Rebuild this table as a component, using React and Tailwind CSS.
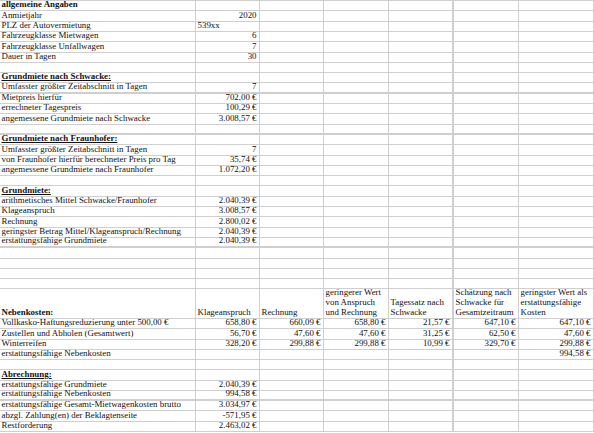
import React from "react";

const W = ["w-[195px]", "w-[63px]", "w-[63px]", "w-[64px]", "w-[63px]", "w-[64px] ml-px", "w-[74px]"];
const HC = { 8: "h-[8px]", 9: "h-[9px]", 10: "h-[10px]", 29: "h-[29px]" };

function Cell({ c, i }) {
  let t = c, r = false, b = false, u = false, lines = null;
  if (c && typeof c === "object") {
    t = c.t; r = c.r; b = c.b; u = c.u; lines = c.lines;
  } else if (typeof c === "string" && i > 0 && c !== "539xx") {
    r = true;
  }
  return (
    <div
      className={`${W[i]} bg-white h-full shrink-0 flex flex-col justify-end whitespace-nowrap pb-[1px] ${
        lines ? "leading-[10px]" : "leading-[9px]"
      } ${r ? "items-end pr-[2.5px]" : "items-start pl-[1.5px]"}`}
    >
      {lines ? (
        lines.map((l, k) => <div key={k}>{l}</div>)
      ) : t ? (
        <div className={`${b ? "font-bold" : ""} ${u ? "underline underline-offset-[1px]" : ""}`}>{t}</div>
      ) : null}
    </div>
  );
}

function Row({ cells = [], h, thick = false }) {
  const all = [0, 1, 2, 3, 4, 5, 6].map((k) => cells[k] ?? "");
  return (
    <div className={`flex gap-px ${HC[h]} ${thick ? "mb-px" : ""}`}>
      {all.map((c, i) => (
        <Cell key={i} c={c} i={i} />
      ))}
    </div>
  );
}

const H = (t, u = true) => ({ t, b: true, u });

const rows = [
  { cells: [H("allgemeine Angaben", false)] },
  { cells: ["Anmietjahr", "2020"] },
  { cells: ["PLZ der Autovermietung", "539xx"] },
  { cells: ["Fahrzeugklasse Mietwagen", "6"] },
  { cells: ["Fahrzeugklasse Unfallwagen", "7"] },
  { cells: ["Dauer in Tagen", "30"] },
  {},
  { cells: [H("Grundmiete nach Schwacke:")] },
  { cells: ["Umfasster größter Zeitabschnitt in Tagen", "7"], thick: true },
  { cells: ["Mietpreis hierfür", "702,00 €"] },
  { cells: ["errechneter Tagespreis", "100,29 €"] },
  { cells: ["angemessene Grundmiete nach Schwacke", "3.008,57 €"] },
  { thick: true },
  { cells: [H("Grundmiete nach Fraunhofer:")] },
  { cells: ["Umfasster größter Zeitabschnitt in Tagen", "7"] },
  { cells: ["von Fraunhofer hierfür berechneter Preis pro Tag", "35,74 €"] },
  { cells: ["angemessene Grundmiete nach Fraunhofer", "1.072,20 €"] },
  {},
  { cells: [H("Grundmiete:")] },
  { cells: ["arithmetisches Mittel Schwacke/Fraunhofer", "2.040,39 €"] },
  { cells: ["Klageanspruch", "3.008,57 €"] },
  { cells: ["Rechnung", "2.800,02 €"] },
  { cells: ["geringster Betrag Mittel/Klageanspruch/Rechnung", "2.040,39 €"] },
  { cells: ["erstattungsfähige Grundmiete", "2.040,39 €"], thick: true },
  {},
  {},
  {},
  {},
  {
    cells: [
      H("Nebenkosten:", false),
      { t: "Klageanspruch" },
      { t: "Rechnung" },
      { lines: ["geringerer Wert", "von Anspruch", "und Rechnung"] },
      { lines: ["Tagessatz nach", "Schwacke"] },
      { lines: ["Schätzung nach", "Schwacke für", "Gesamtzeitraum"] },
      { lines: ["geringster Wert als", "erstattungsfähige", "Kosten"] },
    ],
  },
  { cells: ["Vollkasko-Haftungsreduzierung unter 500,00 €", "658,80 €", "660,09 €", "658,80 €", "21,57 €", "647,10 €", "647,10 €"] },
  { cells: ["Zustellen und Abholen (Gesamtwert)", "56,70 €", "47,60 €", "47,60 €", "31,25 €", "62,50 €", "47,60 €"] },
  { cells: ["Winterreifen", "328,20 €", "299,88 €", "299,88 €", "10,99 €", "329,70 €", "299,88 €"] },
  { cells: ["erstattungsfähige Nebenkosten", "", "", "", "", "", "994,58 €"] },
  {},
  { cells: [H("Abrechnung:")] },
  { cells: ["erstattungsfähige Grundmiete", "2.040,39 €"] },
  { cells: ["erstattungsfähige Nebenkosten", "994,58 €"], thick: true },
  { cells: ["erstattungsfähige Gesamt-Mietwagenkosten brutto", "3.034,97 €"] },
  { cells: ["abzgl. Zahlung(en) der Beklagtenseite", "-571,95 €"] },
  { cells: ["Restforderung", "2.463,02 €"] },
];

// pixel positions of the row lines, as in the sheet
function boundaries() {
  const b = [];
  for (let n = 1; n <= 28; n++) b.push(Math.round(10.3 * n + 0.001));
  b.push(318);
  for (let k = 1; k <= 11; k++) b.push(Math.round(318 + 10.25 * k));
  return b;
}

export default function App() {
  const bounds = boundaries();
  return (
    <div
      className="w-[594px] h-[433px] bg-white overflow-hidden text-[8.9px] text-[#111]"
      style={{ fontFamily: '"Liberation Serif", serif' }}
    >
      <div className="flex flex-col gap-px bg-[#cfcfcf] py-px pr-px">
        {rows.map((r, i) => {
          const span = bounds[i] - (i === 0 ? 0 : bounds[i - 1]);
          const h = span - 1 - (r.thick ? 1 : 0);
          return <Row key={i} cells={r.cells} thick={r.thick} h={h} />;
        })}
      </div>
    </div>
  );
}
